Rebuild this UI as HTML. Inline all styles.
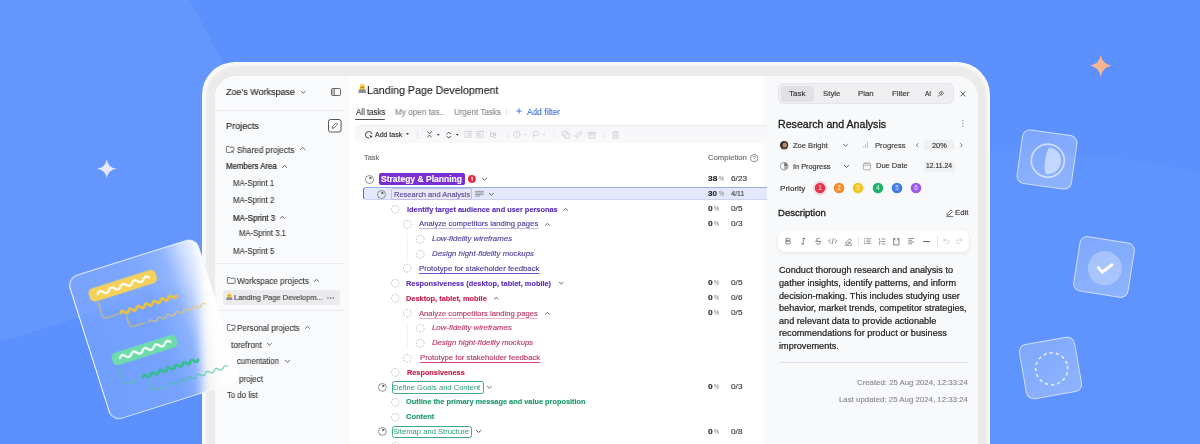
<!DOCTYPE html>
<html><head><meta charset="utf-8">
<style>
*{box-sizing:border-box;margin:0;padding:0}
html,body{width:1200px;height:444px;overflow:hidden}
body{position:relative;font-family:"Liberation Sans",sans-serif;color:#222;background:#5a8df6}
.a{position:absolute;white-space:nowrap;will-change:transform;-webkit-text-stroke:0.14px currentColor}
.abs{position:absolute}
svg{position:absolute;overflow:visible}
.u{text-decoration:underline;text-underline-offset:1.6px;text-decoration-thickness:0.7px}
</style></head><body>
<div class="abs" style="left:0;top:0;width:1200px;height:444px;background:#5b90fd"></div>
<div class="abs" style="left:0;top:0;width:1200px;height:444px;background:rgba(255,255,255,0.055);clip-path:polygon(0 0,190px 0,317px 244px,0 342px)"></div>
<div class="abs" style="left:51px;top:151px;width:1898px;height:1898px;border-radius:50%;background:rgba(230,255,255,0.03)"></div>
<div class="abs" style="left:202px;top:62px;width:788px;height:460px;border-radius:33px;background:#fafafa"></div>
<div class="abs" style="left:205.5px;top:65.5px;width:781px;height:460px;border-radius:30px;background:#ebebeb;filter:blur(1.2px)"></div>
<div class="abs" style="left:215px;top:75.5px;width:763px;height:460px;border-radius:22px 22px 0 0;background:#fff;overflow:hidden"><div class="abs" style="left:0;top:0;width:133px;height:460px;background:#f9fafc;box-shadow:1px 0 2px rgba(0,0,0,0.02)"></div><div class="abs" style="left:550px;top:0;width:213px;height:460px;background:#f8f9fb;box-shadow:-1px 0 3px rgba(0,0,0,0.03)"></div></div>
<div class="a" style="left:226.00px;top:86.17px;font-size:9.512px;line-height:12px;color:#2a2a2a;transform:scaleX(0.943);transform-origin:0 50%;-webkit-text-stroke:0.15px #2a2a2a;">Zoe’s Workspase</div>
<svg style="left:301px;top:91.0625px" width="4.5" height="2.475" viewBox="0 0 4.5 2.475"><path d="M0.4,0.4 L2.25,2.075 L4.1,0.4" fill="none" stroke="#555" stroke-width="0.9" stroke-linecap="round" stroke-linejoin="round"/></svg>
<svg style="left:330.5px;top:87.8px" width="10" height="8" viewBox="0 0 10 8"><rect x="0.5" y="0.5" width="9" height="7" rx="1" fill="none" stroke="#555" stroke-width="0.9"/><line x1="3.3" y1="0.5" x2="3.3" y2="7.5" stroke="#555" stroke-width="0.9"/><rect x="1" y="1" width="2.3" height="6" fill="#bbb"/></svg>
<div class="abs" style="left:216px;top:110px;width:128px;height:1px;background:#ececef"></div>
<div class="a" style="left:226.00px;top:119.97px;font-size:9.683px;line-height:12px;color:#2a2a2a;transform:scaleX(0.943);transform-origin:0 50%;-webkit-text-stroke:0.15px #2a2a2a;">Projects</div>
<svg style="left:328px;top:119px" width="13.5" height="13.5" viewBox="0 0 13.5 13.5"><rect x="0.5" y="0.5" width="12.5" height="12.5" rx="2" fill="#fff" stroke="#444" stroke-width="0.9"/><path d="M4.2,9.3 L4.5,7.6 L8.3,3.8 L9.7,5.2 L5.9,9 Z" fill="none" stroke="#444" stroke-width="0.8" stroke-linejoin="round"/></svg>
<svg style="left:226px;top:145.89999999999998px" width="8.5" height="6.8" viewBox="0 0 8.5 6.8"><path d="M0.4,1 Q0.4,0.4 1,0.4 L3,0.4 L3.8,1.3 L7.5,1.3 Q8.1,1.3 8.1,1.9 L8.1,3.6  L4.6,6.4 L1,6.4 Q0.4,6.4 0.4,5.8 Z" fill="none" stroke="#555" stroke-width="0.8" stroke-linejoin="round"/><path d="M5.6,4.6 L7.8,6.8 M7.8,4.6 L5.6,6.8" stroke="#555" stroke-width="0.8"/></svg>
<div class="a" style="left:236.70px;top:143.56px;font-size:8.686px;line-height:12px;color:#353535;transform:scaleX(0.943);transform-origin:0 50%;-webkit-text-stroke:0.1px #353535;">Shared projects</div>
<svg style="left:299.5px;top:147.4875px" width="5.5" height="3.0250000000000004" viewBox="0 0 5.5 3.0250000000000004"><path d="M0.4,2.6250000000000004 L2.75,0.4 L5.1,2.6250000000000004" fill="none" stroke="#555" stroke-width="0.9" stroke-linecap="round" stroke-linejoin="round"/></svg>
<div class="a" style="left:226.20px;top:160.75px;font-size:8.280px;line-height:12px;color:#1e1e1e;transform:scaleX(0.943);transform-origin:0 50%;-webkit-text-stroke:0.2px #1e1e1e;">Members Area</div>
<svg style="left:282px;top:164.76999999999998px" width="5.199999999999989" height="2.859999999999994" viewBox="0 0 5.199999999999989 2.859999999999994"><path d="M0.4,2.459999999999994 L2.5999999999999943,0.4 L4.799999999999988,2.459999999999994" fill="none" stroke="#444" stroke-width="0.9" stroke-linecap="round" stroke-linejoin="round"/></svg>
<div class="a" style="left:232.80px;top:177.55px;font-size:8.272px;line-height:12px;color:#353535;transform:scaleX(0.943);transform-origin:0 50%;-webkit-text-stroke:0.1px #353535;">MA-Sprint 1</div>
<div class="a" style="left:232.60px;top:194.15px;font-size:8.312px;line-height:12px;color:#353535;transform:scaleX(0.943);transform-origin:0 50%;-webkit-text-stroke:0.1px #353535;">MA-Sprint 2</div>
<div class="a" style="left:232.60px;top:211.55px;font-size:8.493px;line-height:12px;color:#1e1e1e;transform:scaleX(0.943);transform-origin:0 50%;-webkit-text-stroke:0.2px #1e1e1e;">MA-Sprint 3</div>
<svg style="left:280px;top:216.18px" width="4.800000000000011" height="2.6400000000000063" viewBox="0 0 4.800000000000011 2.6400000000000063"><path d="M0.4,2.2400000000000064 L2.4000000000000057,0.4 L4.400000000000011,2.2400000000000064" fill="none" stroke="#444" stroke-width="0.9" stroke-linecap="round" stroke-linejoin="round"/></svg>
<div class="a" style="left:238.60px;top:228.35px;font-size:8.131px;line-height:12px;color:#353535;transform:scaleX(0.943);transform-origin:0 50%;-webkit-text-stroke:0.1px #353535;">MA-Sprint 3.1</div>
<div class="a" style="left:232.60px;top:245.15px;font-size:8.312px;line-height:12px;color:#353535;transform:scaleX(0.943);transform-origin:0 50%;-webkit-text-stroke:0.1px #353535;">MA-Sprint 5</div>
<div class="abs" style="left:216px;top:263px;width:128px;height:1px;background:#ececef"></div>
<svg style="left:226.5px;top:277.4px" width="8.5" height="6.8" viewBox="0 0 8.5 6.8"><path d="M0.4,1 Q0.4,0.4 1,0.4 L3,0.4 L3.8,1.3 L7.5,1.3 Q8.1,1.3 8.1,1.9 L8.1,5.8 Q8.1,6.4 7.5,6.4 L1,6.4  Q0.4,6.4 0.4,5.8 Z" fill="none" stroke="#555" stroke-width="0.8" stroke-linejoin="round"/></svg>
<div class="a" style="left:236.90px;top:275.26px;font-size:8.720px;line-height:12px;color:#353535;transform:scaleX(0.943);transform-origin:0 50%;-webkit-text-stroke:0.1px #353535;">Workspace projects</div>
<svg style="left:314px;top:279.125px" width="5" height="2.75" viewBox="0 0 5 2.75"><path d="M0.4,2.35 L2.5,0.4 L4.6,2.35" fill="none" stroke="#555" stroke-width="0.9" stroke-linecap="round" stroke-linejoin="round"/></svg>
<div class="abs" style="left:222.7px;top:289.7px;width:117.3px;height:15.7px;border-radius:3px;background:#ebebee"></div>
<svg style="left:226.2px;top:293.2px" width="6.75" height="7.050000000000001" viewBox="0 0 9 9.4"><path d="M0.2,9.4 L0.9,6.3 Q1.2,5.3 2.4,5.3 L6.6,5.3 Q7.8,5.3 8.1,6.3 L8.8,9.4 Z" fill="#8e9099"/><rect x="2" y="1.3" width="5" height="4.6" rx="1.3" fill="#f2c338"/><path d="M1.7,2.2 Q1.7,0 4.5,0 Q7.3,0 7.3,2.2 Z" fill="#f7d355"/><circle cx="3.5" cy="3.5" r="0.55" fill="#5a4200"/><circle cx="5.5" cy="3.5" r="0.55" fill="#5a4200"/></svg>
<div class="a" style="left:233.70px;top:292.04px;font-size:8.004px;line-height:12px;color:#353535;transform:scaleX(0.943);transform-origin:0 50%;-webkit-text-stroke:0.1px #353535;">Landing Page Developm...</div>
<svg style="left:327.4px;top:297px" width="7.2" height="2" viewBox="0 0 7.2 2"><circle cx="0.9" cy="1" r="0.7" fill="#555"/><circle cx="3.6" cy="1" r="0.7" fill="#555"/><circle cx="6.3" cy="1" r="0.7" fill="#555"/></svg>
<div class="abs" style="left:216px;top:310px;width:128px;height:1px;background:#ececef"></div>
<svg style="left:226.5px;top:324.09999999999997px" width="8.5" height="6.8" viewBox="0 0 8.5 6.8"><path d="M0.4,1 Q0.4,0.4 1,0.4 L3,0.4 L3.8,1.3 L7.5,1.3 Q8.1,1.3 8.1,1.9 L8.1,3.6  L4.6,6.4 L1,6.4 Q0.4,6.4 0.4,5.8 Z" fill="none" stroke="#555" stroke-width="0.8" stroke-linejoin="round"/><path d="M5.6,4.6 L7.8,6.8 M7.8,4.6 L5.6,6.8" stroke="#555" stroke-width="0.8"/></svg>
<div class="a" style="left:236.90px;top:322.35px;font-size:8.602px;line-height:12px;color:#353535;transform:scaleX(0.943);transform-origin:0 50%;-webkit-text-stroke:0.1px #353535;">Personal projects</div>
<svg style="left:305px;top:325.925px" width="5" height="2.75" viewBox="0 0 5 2.75"><path d="M0.4,2.35 L2.5,0.4 L4.6,2.35" fill="none" stroke="#555" stroke-width="0.9" stroke-linecap="round" stroke-linejoin="round"/></svg>
<div class="a" style="left:230.60px;top:339.06px;font-size:8.765px;line-height:12px;color:#353535;transform:scaleX(0.943);transform-origin:0 50%;-webkit-text-stroke:0.1px #353535;">torefront</div>
<svg style="left:267px;top:343.28000000000003px" width="4.800000000000011" height="2.6400000000000063" viewBox="0 0 4.800000000000011 2.6400000000000063"><path d="M0.4,0.4 L2.4000000000000057,2.2400000000000064 L4.400000000000011,0.4" fill="none" stroke="#555" stroke-width="0.9" stroke-linecap="round" stroke-linejoin="round"/></svg>
<div class="a" style="left:237.00px;top:356.35px;font-size:8.171px;line-height:12px;color:#353535;transform:scaleX(0.943);transform-origin:0 50%;-webkit-text-stroke:0.1px #353535;">cumentation</div>
<svg style="left:285px;top:360.425px" width="5" height="2.75" viewBox="0 0 5 2.75"><path d="M0.4,0.4 L2.5,2.35 L4.6,0.4" fill="none" stroke="#555" stroke-width="0.9" stroke-linecap="round" stroke-linejoin="round"/></svg>
<div class="a" style="left:238.50px;top:373.25px;font-size:8.476px;line-height:12px;color:#353535;transform:scaleX(0.943);transform-origin:0 50%;-webkit-text-stroke:0.1px #353535;">project</div>
<div class="a" style="left:226.70px;top:389.65px;font-size:8.245px;line-height:12px;color:#353535;transform:scaleX(0.943);transform-origin:0 50%;-webkit-text-stroke:0.1px #353535;">To do list</div>
<svg style="left:358.2px;top:84.4px" width="8.549999999999999" height="8.93" viewBox="0 0 9 9.4"><path d="M0.2,9.4 L0.9,6.3 Q1.2,5.3 2.4,5.3 L6.6,5.3 Q7.8,5.3 8.1,6.3 L8.8,9.4 Z" fill="#8e9099"/><rect x="2" y="1.3" width="5" height="4.6" rx="1.3" fill="#f2c338"/><path d="M1.7,2.2 Q1.7,0 4.5,0 Q7.3,0 7.3,2.2 Z" fill="#f7d355"/><circle cx="3.5" cy="3.5" r="0.55" fill="#5a4200"/><circle cx="5.5" cy="3.5" r="0.55" fill="#5a4200"/></svg>
<div class="a" style="left:366.60px;top:83.70px;font-size:11.301px;line-height:12px;color:#1e1e1e;transform:scaleX(0.943);transform-origin:0 50%;">Landing Page Development</div>
<div class="a" style="left:355.60px;top:105.75px;font-size:8.398px;line-height:12px;color:#333;transform:scaleX(0.943);transform-origin:0 50%;">All tasks</div>
<div class="abs" style="left:355.2px;top:118.8px;width:30.3px;height:1.3px;background:#555;border-radius:1px"></div>
<div class="a" style="left:394.80px;top:105.76px;font-size:8.687px;line-height:12px;color:#8c8c90;transform:scaleX(0.943);transform-origin:0 50%;">My open tas..</div>
<div class="a" style="left:453.80px;top:105.75px;font-size:8.598px;line-height:12px;color:#8c8c90;transform:scaleX(0.943);transform-origin:0 50%;">Urgent Tasks</div>
<div class="abs" style="left:506px;top:108px;width:0.7px;height:7.5px;background:#e6e6e8"></div>
<svg style="left:515.8px;top:108px" width="6" height="6" viewBox="0 0 6 6"><path d="M3,0.3 V5.7 M0.3,3 H5.7" stroke="#3c6fd6" stroke-width="0.9"/></svg>
<div class="a" style="left:527.00px;top:105.76px;font-size:8.863px;line-height:12px;color:#3c6fd6;transform:scaleX(0.943);transform-origin:0 50%;">Add filter</div>
<div class="abs" style="left:355px;top:125.3px;width:412px;height:18px;border-radius:6px 0 0 0;background:linear-gradient(#f6f6f8,#f9f9fb);border-top:1px solid #eaeaec"></div>
<svg style="left:365px;top:131px" width="8.5" height="8" viewBox="0 0 8.5 8"><path d="M7,3.2 A3.3,3.3 0 1 0 4.2,7.1" fill="none" stroke="#333" stroke-width="0.9"/><path d="M4.6,4 L7.8,5.4 L6.3,6 L5.7,7.6 Z" fill="#333"/></svg>
<div class="a" style="left:374.80px;top:128.63px;font-size:6.988px;line-height:12px;color:#2a2a2a;">Add task</div>
<svg style="left:406.3px;top:133.4px" width="3" height="2" viewBox="0 0 3 2"><path d="M0,0 H3 L1.5,2 Z" fill="#444"/></svg>
<div class="abs" style="left:417.4px;top:132px;width:0.6px;height:7px;background:#e2e2e5"></div>
<svg style="left:427px;top:131.2px" width="5" height="6.8" viewBox="0 0 5 6.8"><path d="M0.4,0.4 L2.5,2.8 L4.6,0.4 M0.4,6.4 L2.5,4 L4.6,6.4" fill="none" stroke="#333" stroke-width="0.8"/></svg>
<svg style="left:436.7px;top:133.6px" width="2.6" height="1.8" viewBox="0 0 2.6 1.8"><path d="M0,0 H2.6 L1.3,1.8 Z" fill="#333"/></svg>
<svg style="left:445.8px;top:131.5px" width="5.6" height="6.2" viewBox="0 0 5.6 6.2"><path d="M0.5,2 L2.8,0.3 L5.1,2 M0.5,4.2 L2.8,5.9 L5.1,4.2" fill="none" stroke="#333" stroke-width="0.8"/></svg>
<svg style="left:455.8px;top:133.6px" width="2.6" height="1.8" viewBox="0 0 2.6 1.8"><path d="M0,0 H2.6 L1.3,1.8 Z" fill="#333"/></svg>
<svg style="left:463.8px;top:131.2px" width="8" height="6.5" viewBox="0 0 8 6.5"><path d="M0,0.4 H8 M3.2,2.4 H8 M3.2,4.2 H8 M0,6.1 H8 M0.3,1.9 L2,3.3 L0.3,4.6" fill="none" stroke="#c4c4c8" stroke-width="0.7"/></svg>
<svg style="left:475.8px;top:131.2px" width="8" height="6.5" viewBox="0 0 8 6.5"><path d="M0,0.4 H8 M0,2.4 H4.8 M0,4.2 H4.8 M0,6.1 H8 M7.7,1.9 L6,3.3 L7.7,4.6" fill="none" stroke="#c4c4c8" stroke-width="0.7"/></svg>
<svg style="left:490px;top:131px" width="6" height="7" viewBox="0 0 6 7"><path d="M0.6,0.3 V5.6 H3.5 M0.6,2.8 H3.5" fill="none" stroke="#c4c4c8" stroke-width="0.7"/><rect x="3.5" y="1.9" width="2.2" height="1.8" fill="none" stroke="#c4c4c8" stroke-width="0.6"/><rect x="3.5" y="4.7" width="2.2" height="1.8" fill="none" stroke="#c4c4c8" stroke-width="0.6"/></svg>
<div class="abs" style="left:506.5px;top:132px;width:0.6px;height:7px;background:#ececef"></div>
<svg style="left:513px;top:131.4px" width="7.6" height="7" viewBox="0 0 7.6 7"><circle cx="3.8" cy="3.5" r="3.2" fill="none" stroke="#c8c8cc" stroke-width="0.7"/><path d="M3.8,1.8 V3.6 L4.8,4.3" fill="none" stroke="#c8c8cc" stroke-width="0.6"/></svg>
<svg style="left:524.4px;top:134px" width="2.2" height="1.5" viewBox="0 0 2.2 1.5"><path d="M0,0 H2.2 L1.1,1.5 Z" fill="#c8c8cc"/></svg>
<svg style="left:533px;top:131.4px" width="6.2" height="7" viewBox="0 0 6.2 7"><path d="M0.5,7 V0.6 H5.6 V4.2 H0.5" fill="none" stroke="#cacace" stroke-width="0.6"/></svg>
<svg style="left:543.4px;top:134px" width="2.2" height="1.5" viewBox="0 0 2.2 1.5"><path d="M0,0 H2.2 L1.1,1.5 Z" fill="#c8c8cc"/></svg>
<div class="abs" style="left:554.4px;top:132px;width:0.6px;height:7px;background:#ececef"></div>
<svg style="left:562px;top:131.2px" width="8" height="7.4" viewBox="0 0 8 7.4"><rect x="0.4" y="0.4" width="4.8" height="4.6" rx="0.8" fill="none" stroke="#c4c4c8" stroke-width="0.7"/><rect x="2.8" y="2.6" width="4.8" height="4.6" rx="0.8" fill="#f7f7f9" stroke="#c4c4c8" stroke-width="0.7"/></svg>
<svg style="left:575px;top:131.4px" width="7.6" height="7" viewBox="0 0 7.6 7"><path d="M3.2,2.2 L4.6,0.9 Q5.6,0 6.6,1 Q7.5,2 6.6,2.9 L5.3,4.2 M4.4,4.8 L3,6.1 Q2,7 1,6 Q0.1,5 1,4.1 L2.3,2.8 M2.6,4.4 L5,2.6" fill="none" stroke="#c4c4c8" stroke-width="0.7"/></svg>
<svg style="left:588px;top:131.6px" width="7.6" height="6.4" viewBox="0 0 7.6 6.4"><path d="M0.4,0.4 H7.2 V1.8 H0.4 Z M0.9,1.8 V6 H6.7 V1.8 M2.8,3 L3.8,3.7 L4.8,3" fill="none" stroke="#c4c4c8" stroke-width="0.7"/></svg>
<div class="abs" style="left:603.4px;top:132px;width:0.6px;height:7px;background:#ececef"></div>
<svg style="left:612px;top:131px" width="7" height="7.8" viewBox="0 0 7 7.8"><path d="M0.2,1.5 H6.8 M2.3,1.5 V0.4 H4.7 V1.5 M1,1.5 L1.3,7.4 H5.7 L6,1.5 M2.8,3 V6 M4.2,3 V6" fill="none" stroke="#c8c8cc" stroke-width="0.7"/></svg>
<div class="a" style="left:364.40px;top:152.43px;font-size:7.441px;line-height:12px;color:#6e6e72;">Task</div>
<div class="a" style="left:708.00px;top:152.44px;font-size:7.708px;line-height:12px;color:#6e6e72;">Completion</div>
<svg style="left:749.8px;top:153.8px" width="8.4" height="8.4" viewBox="0 0 8.4 8.4"><circle cx="4.2" cy="4.2" r="3.7" fill="none" stroke="#777" stroke-width="0.8"/><path d="M3,3.3 Q3,2.2 4.2,2.2 Q5.4,2.2 5.4,3.2 Q5.4,3.9 4.2,4.4 V5" fill="none" stroke="#777" stroke-width="0.7"/><circle cx="4.2" cy="6.1" r="0.45" fill="#777"/></svg>
<svg style="left:364.8px;top:174.6px" width="9" height="9" viewBox="0 0 9 9"><circle cx="4.5" cy="4.5" r="4.0" fill="none" stroke="#666" stroke-width="0.7"/><path d="M4.5,4.5 L4.5,1.8 A2.7,2.7 0 0 1 6.85,3.15 Z" fill="#555"/></svg>
<div class="abs" style="left:379px;top:172.9px;width:85.8px;height:12px;border-radius:2px;background:#7a2fd3"></div>
<div class="a" style="left:380.80px;top:173.05px;font-size:8.535px;line-height:12px;color:#fff;font-weight:700;">Strategy &amp; Planning</div>
<svg style="left:468.3px;top:175px" width="7.8" height="7.8" viewBox="0 0 7.8 7.8"><circle cx="3.9" cy="3.9" r="3.9" fill="#e22a45"/><path d="M3.2,2.6 L4.2,2 V5.8" fill="none" stroke="#fff" stroke-width="0.9"/></svg>
<svg style="left:481.7px;top:177.88px" width="4.800000000000011" height="2.6400000000000063" viewBox="0 0 4.800000000000011 2.6400000000000063"><path d="M0.4,0.4 L2.4000000000000057,2.2400000000000064 L4.400000000000011,0.4" fill="none" stroke="#444" stroke-width="0.9" stroke-linecap="round" stroke-linejoin="round"/></svg>
<div class="a" style="left:707.70px;top:173.04px;font-size:7.700px;line-height:12px;color:#2a2a2a;font-weight:700;transform:scaleX(1.086);transform-origin:0 50%;">38</div>
<div class="a" style="left:718.90px;top:173.04px;font-size:7.800px;line-height:12px;color:#8e8e92;transform:scaleX(0.720);transform-origin:0 50%;">%</div>
<div class="a" style="left:730.70px;top:173.04px;font-size:7.600px;line-height:12px;color:#3a3a3a;transform:scaleX(1.088);transform-origin:0 50%;">6/23</div>
<div class="abs" style="left:363.3px;top:187px;width:403.4px;height:13.2px;background:#e5e8fa;border-top:1px solid #93aee8;border-bottom:1px solid #cdd3f2;border-left:1.6px solid #4474d8;border-radius:3px 0 0 3px"></div>
<svg style="left:377.3px;top:189.5px" width="9" height="9" viewBox="0 0 9 9"><circle cx="4.5" cy="4.5" r="4.0" fill="none" stroke="#666" stroke-width="0.7"/><path d="M4.5,4.5 L4.5,1.8 A2.7,2.7 0 0 1 6.85,3.15 Z" fill="#555"/></svg>
<div class="abs" style="left:391.3px;top:187.8px;width:80.8px;height:11.9px;border:1px solid #c3bbe9;border-radius:2px;background:#e9e8fb"></div>
<div class="a" style="left:393.60px;top:188.73px;font-size:7.490px;line-height:12px;color:#564a94;">Research and Analysis</div>
<svg style="left:475.3px;top:191.3px" width="8.7" height="5.4" viewBox="0 0 8.7 5.4"><path d="M0,0.4 H8.7 M0,2 H8.7 M0,3.6 H8.7 M0,5.1 H5.2" stroke="#777" stroke-width="0.7"/></svg>
<svg style="left:489.3px;top:192.6525px" width="4.899999999999977" height="2.694999999999988" viewBox="0 0 4.899999999999977 2.694999999999988"><path d="M0.4,0.4 L2.4499999999999886,2.294999999999988 L4.499999999999977,0.4" fill="none" stroke="#555" stroke-width="0.9" stroke-linecap="round" stroke-linejoin="round"/></svg>
<div class="a" style="left:707.70px;top:187.94px;font-size:7.700px;line-height:12px;color:#2a2a2a;font-weight:700;transform:scaleX(1.039);transform-origin:0 50%;">30</div>
<div class="a" style="left:718.90px;top:187.94px;font-size:7.800px;line-height:12px;color:#8e8e92;transform:scaleX(0.720);transform-origin:0 50%;">%</div>
<div class="a" style="left:730.70px;top:187.94px;font-size:7.600px;line-height:12px;color:#3a3a3a;transform:scaleX(0.941);transform-origin:0 50%;">4/11</div>
<svg style="left:390.5px;top:205.1px" width="8.6" height="8.6" viewBox="0 0 8.6 8.6"><circle cx="4.3" cy="4.3" r="3.8499999999999996" fill="none" stroke="#a2a2a6" stroke-width="0.8" stroke-dasharray="1.55 1.42" stroke-dashoffset="0.7"/></svg>
<div class="a" style="left:407.00px;top:203.53px;font-size:7.404px;line-height:12px;color:#5c30bc;font-weight:700;">Identify target audience and user personas</div>
<svg style="left:563px;top:208.025px" width="5" height="2.75" viewBox="0 0 5 2.75"><path d="M0.4,2.35 L2.5,0.4 L4.6,2.35" fill="none" stroke="#555" stroke-width="0.9" stroke-linecap="round" stroke-linejoin="round"/></svg>
<div class="a" style="left:707.70px;top:203.24px;font-size:7.700px;line-height:12px;color:#2a2a2a;font-weight:700;transform:scaleX(1.097);transform-origin:0 50%;">0</div>
<div class="a" style="left:713.90px;top:203.24px;font-size:7.800px;line-height:12px;color:#8e8e92;transform:scaleX(0.720);transform-origin:0 50%;">%</div>
<div class="a" style="left:730.70px;top:203.24px;font-size:7.600px;line-height:12px;color:#3a3a3a;transform:scaleX(1.088);transform-origin:0 50%;">0/5</div>
<svg style="left:403.2px;top:219.6px" width="8.6" height="8.6" viewBox="0 0 8.6 8.6"><circle cx="4.3" cy="4.3" r="3.8499999999999996" fill="none" stroke="#a2a2a6" stroke-width="0.8" stroke-dasharray="1.55 1.42" stroke-dashoffset="0.7"/></svg>
<div class="a u" style="left:419.30px;top:218.04px;font-size:7.699px;line-height:12px;color:#4c3c9c;text-decoration-color:#c9b9ef;">Analyze competitors landing pages</div>
<svg style="left:545px;top:222.58px" width="4.7999999999999545" height="2.6399999999999753" viewBox="0 0 4.7999999999999545 2.6399999999999753"><path d="M0.4,2.2399999999999753 L2.3999999999999773,0.4 L4.399999999999954,2.2399999999999753" fill="none" stroke="#555" stroke-width="0.9" stroke-linecap="round" stroke-linejoin="round"/></svg>
<div class="a" style="left:707.70px;top:217.74px;font-size:7.700px;line-height:12px;color:#2a2a2a;font-weight:700;transform:scaleX(1.097);transform-origin:0 50%;">0</div>
<div class="a" style="left:713.90px;top:217.74px;font-size:7.800px;line-height:12px;color:#8e8e92;transform:scaleX(0.720);transform-origin:0 50%;">%</div>
<div class="a" style="left:730.70px;top:217.74px;font-size:7.600px;line-height:12px;color:#3a3a3a;transform:scaleX(1.088);transform-origin:0 50%;">0/3</div>
<svg style="left:416px;top:234.7px" width="8.6" height="8.6" viewBox="0 0 8.6 8.6"><circle cx="4.3" cy="4.3" r="3.8499999999999996" fill="none" stroke="#a2a2a6" stroke-width="0.8" stroke-dasharray="1.55 1.42" stroke-dashoffset="0.7"/></svg>
<div class="a" style="left:431.70px;top:233.14px;font-size:7.896px;line-height:12px;color:#56409f;font-style:italic;">Low-fidelity wireframes</div>
<svg style="left:416px;top:249.6px" width="8.6" height="8.6" viewBox="0 0 8.6 8.6"><circle cx="4.3" cy="4.3" r="3.8499999999999996" fill="none" stroke="#a2a2a6" stroke-width="0.8" stroke-dasharray="1.55 1.42" stroke-dashoffset="0.7"/></svg>
<div class="a" style="left:431.70px;top:248.04px;font-size:7.850px;line-height:12px;color:#56409f;font-style:italic;">Design hight-fidelity mockups</div>
<svg style="left:403.2px;top:264.40000000000003px" width="8.6" height="8.6" viewBox="0 0 8.6 8.6"><circle cx="4.3" cy="4.3" r="3.8499999999999996" fill="none" stroke="#a2a2a6" stroke-width="0.8" stroke-dasharray="1.55 1.42" stroke-dashoffset="0.7"/></svg>
<div class="a u" style="left:419.40px;top:262.84px;font-size:7.776px;line-height:12px;color:#4c3c9c;text-decoration-color:#6f55c8;">Prototype for stakeholder feedback</div>
<svg style="left:390.5px;top:279.2px" width="8.6" height="8.6" viewBox="0 0 8.6 8.6"><circle cx="4.3" cy="4.3" r="3.8499999999999996" fill="none" stroke="#a2a2a6" stroke-width="0.8" stroke-dasharray="1.55 1.42" stroke-dashoffset="0.7"/></svg>
<div class="a" style="left:406.40px;top:277.63px;font-size:7.381px;line-height:12px;color:#5c30bc;font-weight:700;">Responsiveness (desktop, tablet, mobile)</div>
<svg style="left:558.5px;top:282.2625px" width="4.5" height="2.475" viewBox="0 0 4.5 2.475"><path d="M0.4,0.4 L2.25,2.075 L4.1,0.4" fill="none" stroke="#555" stroke-width="0.9" stroke-linecap="round" stroke-linejoin="round"/></svg>
<div class="a" style="left:707.70px;top:277.34px;font-size:7.700px;line-height:12px;color:#2a2a2a;font-weight:700;transform:scaleX(1.097);transform-origin:0 50%;">0</div>
<div class="a" style="left:713.90px;top:277.34px;font-size:7.800px;line-height:12px;color:#8e8e92;transform:scaleX(0.720);transform-origin:0 50%;">%</div>
<div class="a" style="left:730.70px;top:277.34px;font-size:7.600px;line-height:12px;color:#3a3a3a;transform:scaleX(1.088);transform-origin:0 50%;">0/5</div>
<svg style="left:390.5px;top:294.1px" width="8.6" height="8.6" viewBox="0 0 8.6 8.6"><circle cx="4.3" cy="4.3" r="3.8499999999999996" fill="none" stroke="#a2a2a6" stroke-width="0.8" stroke-dasharray="1.55 1.42" stroke-dashoffset="0.7"/></svg>
<div class="a" style="left:406.40px;top:292.53px;font-size:7.381px;line-height:12px;color:#c8204c;font-weight:700;">Desktop, tablet, mobile</div>
<svg style="left:494.2px;top:297.19px" width="4.400000000000034" height="2.420000000000019" viewBox="0 0 4.400000000000034 2.420000000000019"><path d="M0.4,2.020000000000019 L2.200000000000017,0.4 L4.000000000000034,2.020000000000019" fill="none" stroke="#555" stroke-width="0.9" stroke-linecap="round" stroke-linejoin="round"/></svg>
<div class="a" style="left:707.70px;top:292.24px;font-size:7.700px;line-height:12px;color:#2a2a2a;font-weight:700;transform:scaleX(1.097);transform-origin:0 50%;">0</div>
<div class="a" style="left:713.90px;top:292.24px;font-size:7.800px;line-height:12px;color:#8e8e92;transform:scaleX(0.720);transform-origin:0 50%;">%</div>
<div class="a" style="left:730.70px;top:292.24px;font-size:7.600px;line-height:12px;color:#3a3a3a;transform:scaleX(1.088);transform-origin:0 50%;">0/6</div>
<svg style="left:403.2px;top:309.1px" width="8.6" height="8.6" viewBox="0 0 8.6 8.6"><circle cx="4.3" cy="4.3" r="3.8499999999999996" fill="none" stroke="#a2a2a6" stroke-width="0.8" stroke-dasharray="1.55 1.42" stroke-dashoffset="0.7"/></svg>
<div class="a u" style="left:419.30px;top:307.54px;font-size:7.679px;line-height:12px;color:#b8375e;text-decoration-color:#f1b3c4;">Analyze competitors landing pages</div>
<svg style="left:544.6px;top:312.08000000000004px" width="4.7999999999999545" height="2.6399999999999753" viewBox="0 0 4.7999999999999545 2.6399999999999753"><path d="M0.4,2.2399999999999753 L2.3999999999999773,0.4 L4.399999999999954,2.2399999999999753" fill="none" stroke="#555" stroke-width="0.9" stroke-linecap="round" stroke-linejoin="round"/></svg>
<div class="a" style="left:707.70px;top:307.24px;font-size:7.700px;line-height:12px;color:#2a2a2a;font-weight:700;transform:scaleX(1.097);transform-origin:0 50%;">0</div>
<div class="a" style="left:713.90px;top:307.24px;font-size:7.800px;line-height:12px;color:#8e8e92;transform:scaleX(0.720);transform-origin:0 50%;">%</div>
<div class="a" style="left:730.70px;top:307.24px;font-size:7.600px;line-height:12px;color:#3a3a3a;transform:scaleX(1.088);transform-origin:0 50%;">0/5</div>
<svg style="left:416px;top:323.8px" width="8.6" height="8.6" viewBox="0 0 8.6 8.6"><circle cx="4.3" cy="4.3" r="3.8499999999999996" fill="none" stroke="#a2a2a6" stroke-width="0.8" stroke-dasharray="1.55 1.42" stroke-dashoffset="0.7"/></svg>
<div class="a" style="left:431.90px;top:322.24px;font-size:7.876px;line-height:12px;color:#c23865;font-style:italic;">Low-fidelity wireframes</div>
<svg style="left:416px;top:338.7px" width="8.6" height="8.6" viewBox="0 0 8.6 8.6"><circle cx="4.3" cy="4.3" r="3.8499999999999996" fill="none" stroke="#a2a2a6" stroke-width="0.8" stroke-dasharray="1.55 1.42" stroke-dashoffset="0.7"/></svg>
<div class="a" style="left:431.90px;top:337.14px;font-size:7.796px;line-height:12px;color:#c23865;font-style:italic;">Design hight-fidelity mockups</div>
<svg style="left:403.2px;top:353.6px" width="8.6" height="8.6" viewBox="0 0 8.6 8.6"><circle cx="4.3" cy="4.3" r="3.8499999999999996" fill="none" stroke="#a2a2a6" stroke-width="0.8" stroke-dasharray="1.55 1.42" stroke-dashoffset="0.7"/></svg>
<div class="a u" style="left:419.70px;top:352.04px;font-size:7.757px;line-height:12px;color:#b8375e;text-decoration-color:#d9426a;">Prototype for stakeholder feedback</div>
<svg style="left:390.5px;top:368.40000000000003px" width="8.6" height="8.6" viewBox="0 0 8.6 8.6"><circle cx="4.3" cy="4.3" r="3.8499999999999996" fill="none" stroke="#a2a2a6" stroke-width="0.8" stroke-dasharray="1.55 1.42" stroke-dashoffset="0.7"/></svg>
<div class="a" style="left:406.50px;top:366.83px;font-size:7.322px;line-height:12px;color:#c8204c;font-weight:700;">Responsiveness</div>
<svg style="left:377.5px;top:383.1px" width="8.8" height="8.8" viewBox="0 0 8.8 8.8"><circle cx="4.4" cy="4.4" r="3.9000000000000004" fill="none" stroke="#666" stroke-width="0.7"/><path d="M4.4,4.4 L4.4,1.8 A2.6000000000000005,2.6000000000000005 0 0 1 6.66,3.10 Z" fill="#555"/></svg>
<div class="abs" style="left:391.5px;top:381.3px;width:92.00px;height:12.5px;border:1px solid #4aa982;border-radius:2.5px;background:#fff"></div>
<div class="a" style="left:393.40px;top:381.64px;font-size:7.586px;line-height:12px;color:#2a9d70;-webkit-text-stroke:0;">Define Goals and Content</div>
<svg style="left:487.2px;top:386.18px" width="4.800000000000011" height="2.6400000000000063" viewBox="0 0 4.800000000000011 2.6400000000000063"><path d="M0.4,0.4 L2.4000000000000057,2.2400000000000064 L4.400000000000011,0.4" fill="none" stroke="#555" stroke-width="0.9" stroke-linecap="round" stroke-linejoin="round"/></svg>
<div class="a" style="left:707.70px;top:381.34px;font-size:7.700px;line-height:12px;color:#2a2a2a;font-weight:700;transform:scaleX(1.097);transform-origin:0 50%;">0</div>
<div class="a" style="left:713.90px;top:381.34px;font-size:7.800px;line-height:12px;color:#8e8e92;transform:scaleX(0.720);transform-origin:0 50%;">%</div>
<div class="a" style="left:730.70px;top:381.34px;font-size:7.600px;line-height:12px;color:#3a3a3a;transform:scaleX(1.088);transform-origin:0 50%;">0/3</div>
<svg style="left:390.5px;top:397.90000000000003px" width="8.6" height="8.6" viewBox="0 0 8.6 8.6"><circle cx="4.3" cy="4.3" r="3.8499999999999996" fill="none" stroke="#a2a2a6" stroke-width="0.8" stroke-dasharray="1.55 1.42" stroke-dashoffset="0.7"/></svg>
<div class="a" style="left:406.40px;top:396.33px;font-size:7.366px;line-height:12px;color:#1e9a6a;font-weight:700;">Outline the primary message and value proposition</div>
<svg style="left:390.5px;top:412.7px" width="8.6" height="8.6" viewBox="0 0 8.6 8.6"><circle cx="4.3" cy="4.3" r="3.8499999999999996" fill="none" stroke="#a2a2a6" stroke-width="0.8" stroke-dasharray="1.55 1.42" stroke-dashoffset="0.7"/></svg>
<div class="a" style="left:406.40px;top:411.13px;font-size:7.490px;line-height:12px;color:#1e9a6a;font-weight:700;">Content</div>
<svg style="left:377.5px;top:427.40000000000003px" width="8.8" height="8.8" viewBox="0 0 8.8 8.8"><circle cx="4.4" cy="4.4" r="3.9000000000000004" fill="none" stroke="#666" stroke-width="0.7"/><path d="M4.4,4.4 L4.4,1.8 A2.6000000000000005,2.6000000000000005 0 0 1 6.66,3.10 Z" fill="#555"/></svg>
<div class="abs" style="left:391.5px;top:425.6px;width:80.90px;height:12.5px;border:1px solid #4aa982;border-radius:2.5px;background:#fff"></div>
<div class="a" style="left:393.40px;top:425.94px;font-size:7.658px;line-height:12px;color:#2a9d70;-webkit-text-stroke:0;">Sitemap and Structure</div>
<svg style="left:475.7px;top:430.34250000000003px" width="5.300000000000011" height="2.9150000000000067" viewBox="0 0 5.300000000000011 2.9150000000000067"><path d="M0.4,0.4 L2.6500000000000057,2.515000000000007 L4.900000000000011,0.4" fill="none" stroke="#555" stroke-width="0.9" stroke-linecap="round" stroke-linejoin="round"/></svg>
<div class="a" style="left:707.70px;top:425.64px;font-size:7.700px;line-height:12px;color:#2a2a2a;font-weight:700;transform:scaleX(1.097);transform-origin:0 50%;">0</div>
<div class="a" style="left:713.90px;top:425.64px;font-size:7.800px;line-height:12px;color:#8e8e92;transform:scaleX(0.720);transform-origin:0 50%;">%</div>
<div class="a" style="left:730.70px;top:425.64px;font-size:7.600px;line-height:12px;color:#3a3a3a;transform:scaleX(1.088);transform-origin:0 50%;">0/8</div>
<svg style="left:390.5px;top:442.3px" width="8.6" height="8.6" viewBox="0 0 8.6 8.6"><circle cx="4.3" cy="4.3" r="3.8499999999999996" fill="none" stroke="#a2a2a6" stroke-width="0.8" stroke-dasharray="1.55 1.42" stroke-dashoffset="0.7"/></svg>
<div class="a" style="left:406.40px;top:440.73px;font-size:7.480px;line-height:12px;color:#1e9a6a;font-weight:700;">Sitemap structure</div>
<div class="abs" style="left:777.8px;top:83.4px;width:176.2px;height:21px;border-radius:6px;background:#efeff1;border:1px solid #e5e5e8"></div>
<div class="abs" style="left:780.6px;top:86px;width:33px;height:15.6px;border-radius:4px;background:#e0e1e4"></div>
<div class="a" style="left:788.90px;top:88.14px;font-size:8.024px;line-height:12px;color:#333;">Task</div>
<div class="a" style="left:822.80px;top:88.14px;font-size:7.826px;line-height:12px;color:#333;">Style</div>
<div class="a" style="left:857.70px;top:88.14px;font-size:7.794px;line-height:12px;color:#333;">Plan</div>
<div class="a" style="left:891.60px;top:88.14px;font-size:7.826px;line-height:12px;color:#333;">Filter</div>
<div class="a" style="left:925.00px;top:88.12px;font-size:6.559px;line-height:12px;color:#333;">AI</div>
<svg style="left:936.5px;top:90.2px" width="7.6" height="7.6" viewBox="0 0 7.6 7.6"><path d="M1,6.6 L3,4.6 M2.2,3.2 L4.4,1 L6.6,3.2 L4.4,5.4 Z M4.4,2.2 V4.2" fill="none" stroke="#444" stroke-width="0.75" stroke-linejoin="round"/></svg>
<svg style="left:960.3px;top:91.2px" width="5.8" height="5.8" viewBox="0 0 5.8 5.8"><path d="M0.4,0.4 L5.4,5.4 M5.4,0.4 L0.4,5.4" stroke="#444" stroke-width="0.85"/></svg>
<div class="a" style="left:777.80px;top:117.79px;font-size:10.636px;line-height:12px;color:#1a1a1a;-webkit-text-stroke:0.3px #1a1a1a;">Research and Analysis</div>
<svg style="left:962.2px;top:120px" width="1.8" height="7" viewBox="0 0 1.8 7"><circle cx="0.9" cy="0.9" r="0.6" fill="#666"/><circle cx="0.9" cy="3.5" r="0.6" fill="#666"/><circle cx="0.9" cy="6.1" r="0.6" fill="#666"/></svg>
<svg style="left:779.7px;top:141px" width="8.4" height="8.4" viewBox="0 0 8.4 8.4"><defs><clipPath id="av"><circle cx="4.2" cy="4.2" r="4.2"/></clipPath></defs><g clip-path="url(#av)"><rect width="8.4" height="8.4" fill="#3b2a24"/><ellipse cx="4.8" cy="4.2" rx="2.2" ry="2.6" fill="#b88a70"/><path d="M0,8.4 Q1,5 4.2,6 Q7,7 8.4,8.4Z" fill="#5a4438"/></g></svg>
<div class="a" style="left:792.50px;top:139.94px;font-size:7.564px;line-height:12px;color:#333;">Zoe Bright</div>
<svg style="left:843px;top:143.98000000000002px" width="4.7999999999999545" height="2.6399999999999753" viewBox="0 0 4.7999999999999545 2.6399999999999753"><path d="M0.4,0.4 L2.3999999999999773,2.2399999999999753 L4.399999999999954,0.4" fill="none" stroke="#555" stroke-width="0.9" stroke-linecap="round" stroke-linejoin="round"/></svg>
<svg style="left:863px;top:141.4px" width="5" height="7" viewBox="0 0 5 7"><path d="M0.6,6.8 V5.6 M2.5,6.8 V3.4 M4.4,6.8 V0.8" stroke="#aaa" stroke-width="0.8"/></svg>
<div class="a" style="left:874.70px;top:139.94px;font-size:7.672px;line-height:12px;color:#3a3a3a;">Progress</div>
<svg style="left:915.8px;top:143px" width="2.6" height="4.6" viewBox="0 0 2.6 4.6"><path d="M2.3,0.3 L0.4,2.3 L2.3,4.3" fill="none" stroke="#555" stroke-width="0.8"/></svg>
<div class="abs" style="left:923.7px;top:140px;width:30.3px;height:10.3px;border-radius:2px;background:#eff0f2"></div>
<div class="a" style="left:932.00px;top:139.93px;font-size:7.344px;line-height:12px;color:#333;">20%</div>
<svg style="left:960px;top:143px" width="2.6" height="4.6" viewBox="0 0 2.6 4.6"><path d="M0.3,0.3 L2.2,2.3 L0.3,4.3" fill="none" stroke="#555" stroke-width="0.8"/></svg>
<svg style="left:779.7px;top:162.1px" width="8.4" height="8.4" viewBox="0 0 8.4 8.4"><circle cx="4.2" cy="4.2" r="3.8" fill="none" stroke="#888" stroke-width="0.8"/><path d="M4.2,4.2 V0.8 A3.4,3.4 0 0 1 7.6,4.2 Z" fill="#777"/><path d="M4.2,4.2 L7.6,4.2 A3.4,3.4 0 0 1 4.2,7.6 Z" fill="#aaa"/></svg>
<div class="a" style="left:792.50px;top:161.13px;font-size:7.333px;line-height:12px;color:#333;">In Progress</div>
<svg style="left:843.9px;top:165.0975px" width="5.100000000000023" height="2.8050000000000126" viewBox="0 0 5.100000000000023 2.8050000000000126"><path d="M0.4,0.4 L2.5500000000000114,2.4050000000000127 L4.700000000000022,0.4" fill="none" stroke="#555" stroke-width="0.9" stroke-linecap="round" stroke-linejoin="round"/></svg>
<svg style="left:863px;top:162.2px" width="8" height="8.2" viewBox="0 0 8 8.2"><rect x="0.4" y="1.3" width="7.2" height="6.5" rx="1" fill="none" stroke="#999" stroke-width="0.75"/><path d="M0.4,3.2 H7.6 M2.3,0 V2 M5.7,0 V2" stroke="#999" stroke-width="0.75"/></svg>
<div class="a" style="left:875.50px;top:160.44px;font-size:7.503px;line-height:12px;color:#3a3a3a;">Due Date</div>
<div class="abs" style="left:923.7px;top:161px;width:31.3px;height:10.5px;border-radius:2px;background:#eff0f2"></div>
<div class="a" style="left:926.00px;top:160.42px;font-size:6.809px;line-height:12px;color:#333;">12.11.24</div>
<div class="a" style="left:779.70px;top:182.55px;font-size:8.129px;line-height:12px;color:#333;-webkit-text-stroke:0.15px #333;">Priority</div>
<svg style="left:813.00px;top:180.8px" width="14" height="14" viewBox="0 0 14 14"><circle cx="7" cy="7" r="6.4" fill="none" stroke="#f3b9c3" stroke-width="0.8"/><circle cx="7" cy="7" r="5.3" fill="#e5354f"/><text x="7" y="9.3" text-anchor="middle" font-family="Liberation Sans" font-size="6.4" fill="#fff" opacity="0.85">1</text></svg>
<svg style="left:832.20px;top:180.8px" width="14" height="14" viewBox="0 0 14 14"><circle cx="7" cy="7" r="5.3" fill="#f58b2d"/><text x="7" y="9.3" text-anchor="middle" font-family="Liberation Sans" font-size="6.4" fill="#fff" opacity="0.85">2</text></svg>
<svg style="left:851.40px;top:180.8px" width="14" height="14" viewBox="0 0 14 14"><circle cx="7" cy="7" r="5.3" fill="#f2c41d"/><text x="7" y="9.3" text-anchor="middle" font-family="Liberation Sans" font-size="6.4" fill="#fff" opacity="0.85">3</text></svg>
<svg style="left:870.60px;top:180.8px" width="14" height="14" viewBox="0 0 14 14"><circle cx="7" cy="7" r="5.3" fill="#22b06c"/><text x="7" y="9.3" text-anchor="middle" font-family="Liberation Sans" font-size="6.4" fill="#fff" opacity="0.85">4</text></svg>
<svg style="left:889.80px;top:180.8px" width="14" height="14" viewBox="0 0 14 14"><circle cx="7" cy="7" r="5.3" fill="#3e7ce8"/><text x="7" y="9.3" text-anchor="middle" font-family="Liberation Sans" font-size="6.4" fill="#fff" opacity="0.85">5</text></svg>
<svg style="left:909.00px;top:180.8px" width="14" height="14" viewBox="0 0 14 14"><circle cx="7" cy="7" r="5.3" fill="#9d5be8"/><text x="7" y="9.3" text-anchor="middle" font-family="Liberation Sans" font-size="6.4" fill="#fff" opacity="0.85">6</text></svg>
<div class="a" style="left:777.80px;top:207.37px;font-size:9.554px;line-height:12px;color:#1a1a1a;-webkit-text-stroke:0.3px #1a1a1a;">Description</div>
<svg style="left:945.6px;top:209px" width="7.6" height="8" viewBox="0 0 7.6 8"><path d="M0.8,6.2 L1.2,4.6 L4.9,0.9 L6.5,2.5 L2.8,6.2 Z M0.4,7.6 H7.2" fill="none" stroke="#444" stroke-width="0.75" stroke-linejoin="round"/></svg>
<div class="a" style="left:955.00px;top:207.34px;font-size:7.717px;line-height:12px;color:#333;">Edit</div>
<div class="abs" style="left:777.8px;top:230.3px;width:190.9px;height:22px;border-radius:7px;background:#fff;box-shadow:0 1.5px 4px rgba(0,0,0,0.07),0 0 0 0.5px rgba(0,0,0,0.03)"></div>
<svg style="left:785px;top:238.2px" width="6.6" height="6.4" viewBox="0 0 6.6 6.4"><path d="M1,0.4 H3.6 Q5,0.4 5,1.7 Q5,3 3.6,3 H1 Z M1,3 H4 Q5.6,3 5.6,4.5 Q5.6,6 4,6 H1 Z" fill="none" stroke="#666" stroke-width="0.8"/></svg>
<svg style="left:800.8px;top:238.2px" width="4.6" height="6.4" viewBox="0 0 4.6 6.4"><path d="M1.4,0.4 H4.4 M0.2,6 H3.2 M2.9,0.4 L1.7,6" fill="none" stroke="#666" stroke-width="0.8"/></svg>
<svg style="left:814.5px;top:238px" width="6.6" height="6.8" viewBox="0 0 6.6 6.8"><path d="M5,1.2 Q4.5,0.4 3.3,0.4 Q1.5,0.4 1.5,1.8 Q1.5,3 3.3,3.3 M0.2,3.4 H6.4 M1.5,5 Q1.8,6.4 3.3,6.4 Q5.1,6.4 5.1,5 Q5.1,4.3 4.4,3.8" fill="none" stroke="#666" stroke-width="0.75"/></svg>
<svg style="left:828.3px;top:238.2px" width="9.4" height="6.4" viewBox="0 0 9.4 6.4"><path d="M2.6,1.2 L0.5,3.2 L2.6,5.2 M6.8,1.2 L8.9,3.2 L6.8,5.2 M5.4,0.3 L4,6.1" fill="none" stroke="#666" stroke-width="0.75"/></svg>
<svg style="left:844px;top:237.6px" width="8.4" height="7.6" viewBox="0 0 8.4 7.6"><path d="M1.6,5 L5.6,0.8 L7.2,2.4 L3.2,6.4 Z M0.4,7.2 H8 M4.2,5 Q6,4.6 7.6,5.6" fill="none" stroke="#666" stroke-width="0.75"/></svg>
<div class="abs" style="left:857.5px;top:236px;width:0.6px;height:10px;background:#e3e3e6"></div>
<svg style="left:864px;top:238.2px" width="6.6" height="6.2" viewBox="0 0 6.6 6.2"><path d="M2.2,0.8 H6.6 M2.2,3.1 H6.6 M2.2,5.4 H6.6" stroke="#666" stroke-width="0.8"/><circle cx="0.6" cy="0.8" r="0.55" fill="#666"/><circle cx="0.6" cy="3.1" r="0.55" fill="#666"/><circle cx="0.6" cy="5.4" r="0.55" fill="#666"/></svg>
<svg style="left:878.8px;top:237.8px" width="6.4" height="7" viewBox="0 0 6.4 7"><path d="M2.4,1 H6.4 M2.4,3.5 H6.4 M2.4,6 H6.4 M0.5,0.3 V2 M0.3,3 H1.3 L0.3,4.3 H1.3 M0.5,5.2 V6.8" stroke="#666" stroke-width="0.7" fill="none"/></svg>
<svg style="left:893.4px;top:237.6px" width="6.6" height="7.4" viewBox="0 0 6.6 7.4"><path d="M2,0.4 H0.6 V7 H6 V0.4 H4.6" fill="none" stroke="#666" stroke-width="0.8"/><path d="M1.8,0 V2.4 M4.8,0 V2.4" stroke="#666" stroke-width="0.8"/></svg>
<svg style="left:908px;top:238.2px" width="6.6" height="6.2" viewBox="0 0 6.6 6.2"><path d="M0.2,0.5 H6.2 M0.2,2.3 H4.2 M0.2,4 H6.2 M0.2,5.8 H4.2" stroke="#666" stroke-width="0.7"/></svg>
<div class="abs" style="left:922.8px;top:240.9px;width:7.4px;height:0.85px;background:#666"></div>
<div class="abs" style="left:936.5px;top:236px;width:0.6px;height:10px;background:#e6e6e9"></div>
<svg style="left:943px;top:238.3px" width="6.6" height="5.6" viewBox="0 0 6.6 5.6"><path d="M2.2,0.4 L0.4,2 L2.2,3.6 M0.4,2 H4.4 Q6.2,2 6.2,3.7 Q6.2,5.3 4.4,5.3 H2.6" fill="none" stroke="#c6c6ca" stroke-width="0.75"/></svg>
<svg style="left:955.8px;top:238.3px" width="6.6" height="5.6" viewBox="0 0 6.6 5.6"><path d="M4.4,0.4 L6.2,2 L4.4,3.6 M6.2,2 H2.2 Q0.4,2 0.4,3.7 Q0.4,5.3 2.2,5.3 H4" fill="none" stroke="#c6c6ca" stroke-width="0.75"/></svg>
<div class="a" style="left:778.70px;top:264.36px;font-size:9.130px;line-height:12px;color:#222;-webkit-text-stroke:0.22px #222;">Conduct thorough research and analysis to</div>
<div class="a" style="left:778.70px;top:276.93px;font-size:9.130px;line-height:12px;color:#222;-webkit-text-stroke:0.22px #222;">gather insights, identify patterns, and inform</div>
<div class="a" style="left:778.70px;top:289.50px;font-size:9.130px;line-height:12px;color:#222;-webkit-text-stroke:0.22px #222;">decision-making. This includes studying user</div>
<div class="a" style="left:778.70px;top:302.07px;font-size:9.130px;line-height:12px;color:#222;-webkit-text-stroke:0.22px #222;">behavior, market trends, competitor strategies,</div>
<div class="a" style="left:778.70px;top:314.64px;font-size:9.130px;line-height:12px;color:#222;-webkit-text-stroke:0.22px #222;">and relevant data to provide actionable</div>
<div class="a" style="left:778.70px;top:327.21px;font-size:9.130px;line-height:12px;color:#222;-webkit-text-stroke:0.22px #222;">recommendations for product or business</div>
<div class="a" style="left:778.70px;top:339.78px;font-size:9.130px;line-height:12px;color:#222;-webkit-text-stroke:0.22px #222;">improvements.</div>
<div class="abs" style="left:778.7px;top:361.8px;width:189.3px;height:0.8px;background:#e2e2e5"></div>
<div class="a" style="left:857.00px;top:376.54px;font-size:7.828px;line-height:12px;color:#8a8a8e;">Created: 25 Aug 2024, 12:33:24</div>
<div class="a" style="left:839.00px;top:393.54px;font-size:7.864px;line-height:12px;color:#8a8a8e;">Last updated: 25 Aug 2024, 12:33:24</div>
<div class="abs" style="left:85.5px;top:254px;width:136px;height:151px;transform:rotate(-17.6deg);border-radius:11px;background:linear-gradient(90deg,rgba(255,255,255,0.13) 0%,rgba(255,255,255,0.17) 55%,rgba(255,255,255,0.3) 74%,rgba(255,255,255,0.68) 88%,rgba(255,255,255,0.95) 100%);border:1px solid rgba(255,255,255,0.75);overflow:hidden;backdrop-filter:blur(5px)"><svg style="left:0;top:0" width="136" height="151" viewBox="0 0 136 151"><rect x="15.5" y="16.5" width="70" height="13.8" rx="5" fill="#f5d158"/><path d="M24.00,23.60 Q27.00,19.80 30.00,23.60 Q33.00,27.40 36.00,23.60 Q39.00,19.80 42.00,23.60 Q45.00,27.40 48.00,23.60 Q51.00,19.80 54.00,23.60 Q57.00,27.40 60.00,23.60 Q63.00,19.80 66.00,23.60 Q69.00,27.40 72.00,23.60 Q75.00,19.80 78.00,23.60" fill="none" stroke="#fff" stroke-width="2.2" stroke-linecap="round"/><path d="M21.8,31 V46.5 Q21.8,49 24.3,49 H36.5" fill="none" stroke="#e2c05e" stroke-width="1"/><path d="M40.00,49.00 Q42.09,45.60 44.18,49.00 Q46.27,52.40 48.36,49.00 Q50.45,45.60 52.54,49.00 Q54.62,52.40 56.71,49.00 Q58.80,45.60 60.89,49.00 Q62.98,52.40 65.07,49.00 Q67.16,45.60 69.25,49.00 Q71.34,52.40 73.43,49.00 Q75.52,45.60 77.61,49.00 Q79.70,52.40 81.79,49.00 Q83.88,45.60 85.96,49.00 Q88.05,52.40 90.14,49.00 Q92.23,45.60 94.32,49.00 Q96.41,52.40 98.50,49.00" fill="none" stroke="#f2c232" stroke-width="2.6" stroke-linecap="round"/><path d="M44.8,53.5 V62.8 Q44.8,65.3 47.3,65.3 H60.5" fill="none" stroke="#e2c05e" stroke-width="1"/><path d="M64.00,65.80 Q66.31,62.80 68.62,65.80 Q70.92,68.80 73.23,65.80 Q75.54,62.80 77.85,65.80 Q80.15,68.80 82.46,65.80 Q84.77,62.80 87.08,65.80 Q89.38,68.80 91.69,65.80 Q94.00,62.80 96.31,65.80 Q98.62,68.80 100.92,65.80 Q103.23,62.80 105.54,65.80 Q107.85,68.80 110.15,65.80 Q112.46,62.80 114.77,65.80 Q117.08,68.80 119.38,65.80 Q121.69,62.80 124.00,65.80" fill="none" stroke="#e9c55a" stroke-width="1.1" stroke-linecap="round"/><rect x="18" y="84.8" width="67.5" height="13" rx="5" fill="#6ddcaa"/><path d="M26.00,91.30 Q28.94,87.50 31.89,91.30 Q34.83,95.10 37.78,91.30 Q40.72,87.50 43.67,91.30 Q46.61,95.10 49.56,91.30 Q52.50,87.50 55.44,91.30 Q58.39,95.10 61.33,91.30 Q64.28,87.50 67.22,91.30 Q70.17,95.10 73.11,91.30 Q76.06,87.50 79.00,91.30" fill="none" stroke="#fff" stroke-width="2.2" stroke-linecap="round"/><path d="M22.3,99 V115.5 Q22.3,118 24.8,118 H36" fill="none" stroke="#4cc596" stroke-width="1"/><path d="M42.00,116.50 Q44.07,113.10 46.14,116.50 Q48.21,119.90 50.29,116.50 Q52.36,113.10 54.43,116.50 Q56.50,119.90 58.57,116.50 Q60.64,113.10 62.71,116.50 Q64.79,119.90 66.86,116.50 Q68.93,113.10 71.00,116.50 Q73.07,119.90 75.14,116.50 Q77.21,113.10 79.29,116.50 Q81.36,119.90 83.43,116.50 Q85.50,113.10 87.57,116.50 Q89.64,119.90 91.71,116.50 Q93.79,113.10 95.86,116.50 Q97.93,119.90 100.00,116.50" fill="none" stroke="#2fbf87" stroke-width="2.6" stroke-linecap="round"/><path d="M46.3,122 V130 Q46.3,132.5 48.8,132.5 H60.5" fill="none" stroke="#4cc596" stroke-width="1"/><path d="M65.00,132.00 Q67.35,129.00 69.69,132.00 Q72.04,135.00 74.38,132.00 Q76.73,129.00 79.08,132.00 Q81.42,135.00 83.77,132.00 Q86.12,129.00 88.46,132.00 Q90.81,135.00 93.15,132.00 Q95.50,129.00 97.85,132.00 Q100.19,135.00 102.54,132.00 Q104.88,129.00 107.23,132.00 Q109.58,135.00 111.92,132.00 Q114.27,129.00 116.62,132.00 Q118.96,135.00 121.31,132.00 Q123.65,129.00 126.00,132.00" fill="none" stroke="#3ec58f" stroke-width="1.1" stroke-linecap="round"/></svg></div>
<div class="abs" style="left:1019.0px;top:132.0px;width:56px;height:55px;transform:rotate(8deg);border-radius:8px;background:linear-gradient(150deg,rgba(255,255,255,0.2),rgba(255,255,255,0.3));border:1px solid rgba(255,255,255,0.6)"><svg style="left:0;top:0" width="56" height="55" viewBox="0 0 56 55"><circle cx="28" cy="27.5" r="16.5" fill="none" stroke="rgba(255,255,255,0.6)" stroke-width="1.7"/><path d="M27.5,14.2 A13.3,13.3 0 0 1 29.5,40.7 A3,13.3 0 0 1 27.5,14.2 Z" fill="rgba(255,255,255,0.5)"/></svg></div>
<div class="abs" style="left:1075.7px;top:239.0px;width:56px;height:56px;transform:rotate(9deg);border-radius:8px;background:linear-gradient(150deg,rgba(255,255,255,0.2),rgba(255,255,255,0.3));border:1px solid rgba(255,255,255,0.6)"><svg style="left:0;top:0" width="56" height="56" viewBox="0 0 56 56"><circle cx="28" cy="28" r="17" fill="rgba(255,255,255,0.28)"/><path d="M21.5,28.5 L26,32.5 L34.5,23.5" fill="none" stroke="#fff" stroke-width="3" stroke-linecap="round" stroke-linejoin="round"/></svg></div>
<div class="abs" style="left:1021.5px;top:340.0px;width:57px;height:56px;transform:rotate(-10deg);border-radius:8px;background:linear-gradient(150deg,rgba(255,255,255,0.2),rgba(255,255,255,0.3));border:1px solid rgba(255,255,255,0.6)"><svg style="left:0;top:0" width="57" height="56" viewBox="0 0 57 56"><circle cx="28.5" cy="28" r="16" fill="none" stroke="rgba(255,255,255,0.75)" stroke-width="1.7" stroke-dasharray="3.2 3.1"/></svg></div>
<svg style="left:1089.75px;top:54.650000000000006px;filter:blur(0px)" width="21.5" height="21.5" viewBox="-10.75 -10.75 21.5 21.5"><path d="M0,-10.75 Q1.6125,-1.6125 10.75,0 Q1.6125,1.6125 0,10.75 Q-1.6125,1.6125 -10.75,0 Q-1.6125,-1.6125 0,-10.75 Z" fill="#f8b592"/></svg>
<svg style="left:96.75px;top:158.55px;filter:blur(0.35px)" width="19.5" height="19.5" viewBox="-9.75 -9.75 19.5 19.5"><path d="M0,-9.75 Q1.131,-1.131 9.75,0 Q1.131,1.131 0,9.75 Q-1.131,1.131 -9.75,0 Q-1.131,-1.131 0,-9.75 Z" fill="#e2e8fc"/></svg>
<div class="abs" style="left:406.6px;top:233.5px;width:0.8px;height:26px;background:#f4f4f6"></div>
<div class="abs" style="left:406.6px;top:322.5px;width:0.8px;height:26px;background:#f4f4f6"></div>
</body></html>
